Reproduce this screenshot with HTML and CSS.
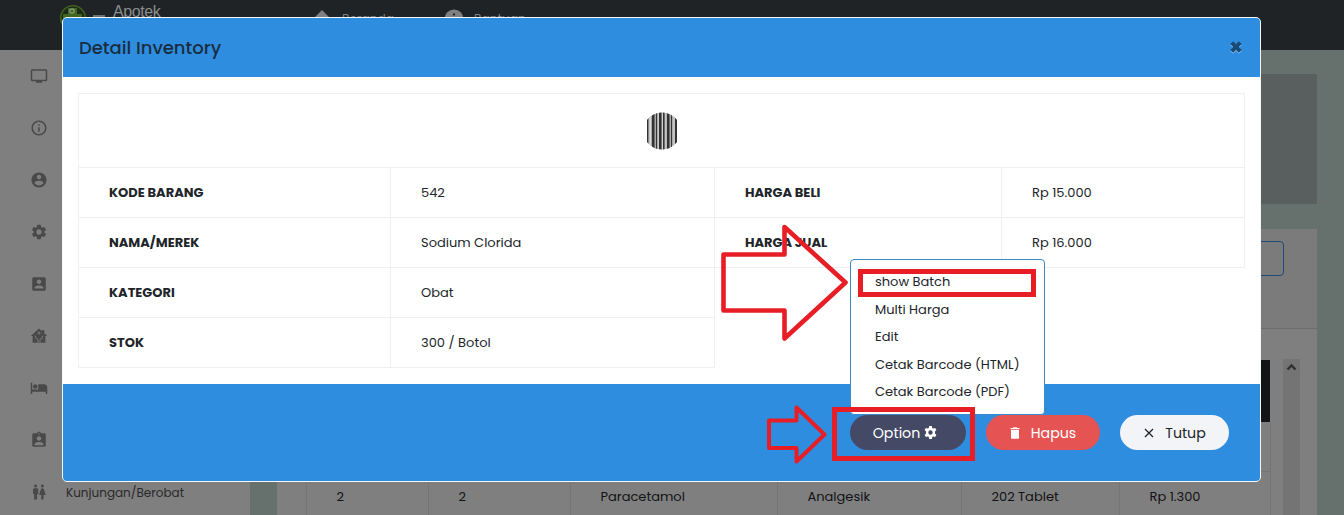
FILE: index.html
```html
<!DOCTYPE html>
<html lang="id">
<head>
<meta charset="utf-8">
<title>Detail Inventory</title>
<link rel="stylesheet" href="styles.css">
</head>
<body>
<div class="app">
  <header class="topbar">
    <svg class="logo" width="28" height="28" viewBox="0 0 28 28"><circle cx="14" cy="14" r="12.3" fill="#1d2a18" stroke="#42611f" stroke-width="1.6"/><path d="M9 4h9v6h5v8H4v-8h5z" fill="#42651f"/><circle cx="13" cy="7" r="2.2" fill="none" stroke="#8a9a7c" stroke-width="1.2"/></svg>
    <span class="burger"></span>
    <span class="brand">Apotek</span>
    <nav class="topnav">
      <a class="toplink"><svg width="18" height="18" viewBox="0 0 18 18"><path d="M9 1l9 9h-3v8H3v-8H0z" fill="#808080"/></svg><span>Beranda</span></a>
      <a class="toplink"><svg width="20" height="20" viewBox="0 0 20 20"><circle cx="10" cy="10" r="9.5" fill="#808080"/><path d="M9 4.500h2v2H9zM9 8.500h2v7H9z" fill="#1f2326"/></svg><span>Bantuan</span></a>
    </nav>
  </header>
  <div class="shell">
    <aside class="sidebar">
      <a class="side"><svg viewBox="0 0 24 24"><path d="M21 3H3c-1.100 0-2 .9-2 2v12c0 1.100.9 2 2 2h5v2h8v-2h5c1.100 0 2-.9 2-2V5c0-1.100-.9-2-2-2zm0 14H3V5h18v12z"/></svg></a>
      <a class="side"><svg viewBox="0 0 24 24"><path d="M11 7h2v2h-2zm0 4h2v6h-2zm1-9C6.480 2 2 6.480 2 12s4.480 10 10 10 10-4.480 10-10S17.520 2 12 2zm0 18c-4.410 0-8-3.590-8-8s3.590-8 8-8 8 3.590 8 8-3.590 8-8 8z"/></svg></a>
      <a class="side"><svg viewBox="0 0 24 24"><path d="M12 2C6.480 2 2 6.480 2 12s4.480 10 10 10 10-4.480 10-10S17.520 2 12 2zm0 3c1.660 0 3 1.340 3 3s-1.340 3-3 3-3-1.340-3-3 1.340-3 3-3zm0 14.200c-2.500 0-4.710-1.280-6-3.220.03-1.990 4-3.080 6-3.080 1.990 0 5.970 1.090 6 3.080-1.290 1.940-3.500 3.220-6 3.220z"/></svg></a>
      <a class="side"><svg viewBox="0 0 24 24"><path d="M19.140 12.940c.04-.3.06-.61.06-.94 0-.32-.02-.64-.07-.94l2.030-1.580c.18-.14.23-.41.12-.61l-1.920-3.320c-.12-.22-.37-.29-.59-.22l-2.390.96c-.5-.38-1.030-.7-1.620-.94l-.36-2.540c-.04-.24-.24-.41-.48-.41h-3.840c-.24 0-.43.17-.47.41l-.36 2.540c-.59.24-1.130.57-1.620.94l-2.390-.96c-.22-.08-.47 0-.59.22L2.740 8.870c-.12.21-.08.47.12.61l2.030 1.580c-.05.3-.09.63-.09.94s.02.64.07.94l-2.030 1.580c-.18.14-.23.41-.12.61l1.920 3.320c.12.22.37.29.59.22l2.390-.96c.5.38 1.030.7 1.620.94l.36 2.540c.05.24.24.41.48.41h3.840c.24 0 .44-.17.47-.41l.36-2.540c.59-.24 1.130-.56 1.620-.94l2.390.96c.22.08.47 0 .59-.22l1.920-3.320c.12-.22.07-.47-.12-.61l-2.010-1.580zM12 15.600c-1.980 0-3.600-1.620-3.600-3.600s1.620-3.600 3.600-3.600 3.600 1.620 3.600 3.600-1.620 3.600-3.600 3.600z"/></svg></a>
      <a class="side"><svg viewBox="0 0 24 24"><path d="M3 5v14c0 1.100.89 2 2 2h14c1.100 0 2-.9 2-2V5c0-1.100-.9-2-2-2H5c-1.110 0-2 .9-2 2zm12 4c0 1.660-1.340 3-3 3s-3-1.340-3-3 1.340-3 3-3 3 1.340 3 3zm-9 8c0-2 4-3.100 6-3.100s6 1.100 6 3.100v1H6v-1z"/></svg></a>
      <a class="side"><svg viewBox="0 0 24 24"><path d="M12 2l4 3.600V4h3v4.200l4 3.800h-2.500v9H3.500v-9H1z"/><g fill="none" stroke="#7f7f7f" stroke-width="1.200"><circle cx="12" cy="8" r="1.400"/><path d="M7 11.500q0 5 3.700 5V21M17 11.500q0 5-3.700 5V21"/></g></svg></a>
      <a class="side"><svg viewBox="0 0 24 24"><path d="M7 13c1.660 0 3-1.340 3-3S8.660 7 7 7s-3 1.340-3 3 1.340 3 3 3zm12-6h-8v7H3V5H1v15h2v-3h18v3h2v-9c0-2.210-1.790-4-4-4z"/></svg></a>
      <a class="side"><svg viewBox="0 0 24 24"><path d="M19 3h-4.180C14.400 1.840 13.300 1 12 1s-2.400.84-2.820 2H5c-1.100 0-2 .9-2 2v14c0 1.100.9 2 2 2h14c1.100 0 2-.9 2-2V5c0-1.100-.9-2-2-2zm-7 0c.55 0 1 .45 1 1s-.45 1-1 1-1-.45-1-1 .45-1 1-1zm0 4c1.660 0 3 1.340 3 3s-1.340 3-3 3-3-1.340-3-3 1.340-3 3-3zm6 12H6v-1.400c0-2 4-3.100 6-3.100s6 1.100 6 3.100V19z"/></svg></a>
      <a class="side"><svg viewBox="0 0 24 24"><path d="M5.500 22v-7.500H4V9c0-1.100.9-2 2-2h3c1.100 0 2 .9 2 2v5.500H9.500V22h-4zM18 22v-6h3l-2.540-7.630C18.180 7.550 17.420 7 16.560 7h-.12c-.86 0-1.630.55-1.900 1.370L12 16h3v6h3zM7.500 6c1.110 0 2-.89 2-2s-.89-2-2-2-2 .89-2 2 .89 2 2 2zm9 0c1.110 0 2-.89 2-2s-.89-2-2-2-2 .89-2 2 .89 2 2 2z"/></svg><span class="side-label">Kunjungan/Berobat</span></a>
    </aside>
    <main class="content">
      <section class="hero"></section>
      <section class="panel">
        <div class="panel-head"><div class="search"></div></div>
        <div class="panel-body">
          <div class="list">
            <div class="list-head"></div>
            <div class="list-row"><span></span><span></span><span></span><span></span><span></span><span></span></div>
            <div class="list-row"><span>2</span><span>2</span><span>Paracetamol</span><span>Analgesik</span><span>202 Tablet</span><span>Rp 1.300</span></div>
          </div>
          <div class="scroll"><svg width="11" height="8" viewBox="0 0 11 8"><path d="M1.500 6.500l4-4 4 4" fill="none" stroke="#303030" stroke-width="2.400"/></svg></div>
        </div>
      </section>
    </main>
  </div>
</div>

<div class="modal">
  <div class="modal-head"><h1>Detail Inventory</h1><svg width="12" height="13" viewBox="0 0 12 13"><path d="M1.700 2.700l8.600 8.600M10.300 2.700l-8.600 8.600" stroke="#88bfee" stroke-width="4"/><path d="M1.700 1.700l8.600 8.600M10.300 1.700l-8.600 8.600" stroke="#194b74" stroke-width="4"/></svg></div>
  <div class="modal-body">
    <div class="barcode">
      <svg width="30" height="38" viewBox="0 0 30 38"><clipPath id="round"><path d="M0 8Q6 .5 15 .5T30 8v22q-6 7.500-15 7.500T0 30z"/></clipPath><g clip-path="url(#round)"><path fill="#aaa" d="M0 0h30v38H0z"/><path fill="#333" d="M0 0h1.300v38H0zM5 0h2.500v38H5zM9 0h1v38H9zM12 0h2.500v38H12zM16 0h1.500v38H16zM20 0h2.500v38H20zM24 0h1v38h-1zM28 0h2v38h-2z"/><path fill="#ddd" d="M2.500 0h1.500v38H2.500zM11 0h.7v38H11zM15 0h.8v38H15zM18.500 0h.8v38h-.8zM26.500 0h1v38h-1z"/></g></svg>
    </div>
    <div class="details">
      <div class="half left">
        <div class="row"><b>KODE BARANG</b><span>542</span></div>
        <div class="row"><b>NAMA/MEREK</b><span>Sodium Clorida</span></div>
        <div class="row"><b>KATEGORI</b><span>Obat</span></div>
        <div class="row"><b>STOK</b><span>300 / Botol</span></div>
      </div>
      <div class="half right">
        <div class="row"><b>HARGA BELI</b><span>Rp 15.000</span></div>
        <div class="row"><b>HARGA JUAL</b><span>Rp 16.000</span></div>
      </div>
    </div>
  </div>
  <div class="modal-foot">
    <button class="btn option"><span>Option</span><svg width="13" height="13" viewBox="2 2 20 20"><path fill="#fff" fill-rule="evenodd" d="M10 2h4l.6 3 1.600.9 2.900-1 2 3.400L18.800 10.400v3.200l2.300 2.100-2 3.400-2.900-1-1.600.9-.6 3h-4l-.6-3-1.600-.9-2.900 1-2-3.400 2.300-2.100v-3.200L2.900 8.300l2-3.400 2.900 1L9.400 5zM12 8.600a3.400 3.400 0 100 6.800 3.400 3.400 0 000-6.800z"/></svg></button>
    <button class="btn delete"><svg width="10" height="12" viewBox="0 0 10 12"><path fill="#fff" d="M.5.900h2.300L3.500.2h3l.7.700h2.300v1.200h-9zM1 2.700h8V11q0 .8-.8.8H1.800Q1 11.800 1 11z"/></svg><span>Hapus</span></button>
    <button class="btn close"><svg width="10" height="10" viewBox="0 0 10 10"><path d="M1 1l8 8M9 1L1 9" stroke="#212529" stroke-width="1.300"/></svg><span>Tutup</span></button>
  </div>
</div>

<div class="menu">
  <a>show Batch</a><a>Multi Harga</a><a>Edit</a><a>Cetak Barcode (HTML)</a><a>Cetak Barcode (PDF)</a>
</div>

<svg class="marks" width="1344" height="515" viewBox="0 0 1344 515" fill="none" stroke="#e81e26" stroke-width="4.600" stroke-linejoin="round">
  <path d="M723.500 254.500h61V227l61 55.500-61 56V310.500h-61z"/>
  <path d="M769 420.500h27.500V407.500l28 27-28 27V448H769z" stroke-width="4"/>
  <path d="M860.500 271.500h173v23h-173zM834.500 409.500h138v49h-138z" stroke-width="5" stroke-linejoin="miter"/>
</svg>
</body>
</html>
```
FILE: styles.css
```css
* { box-sizing: border-box; }
body { margin: 0; width: 1344px; height: 515px; overflow: hidden; position: relative; font-family: Poppins, Inter, "Open Sans", sans-serif; font-size: 13px; color: #212529; background: #66706c; }
svg { display: block; flex: none; }

.app { height: 515px; overflow: hidden; }
.topbar { height: 50px; background: #1f2326; display: flex; align-items: flex-start; padding-left: 59px; }
.logo { margin-top: 4px; }
.burger { width: 12px; height: 2px; background: #6f7274; margin: 15px 8px 0 6px; }
.brand { font: 16px/18px "Liberation Sans", sans-serif; letter-spacing: -.4px; color: #8b8d8e; margin-top: 3px; width: 200px; }
.topnav { display: flex; gap: 49px; margin-top: 9px; }
.toplink { display: flex; gap: 11px; width: 82px; color: #808080; font-size: 12.200px; line-height: 20px; }
.toplink:last-child { gap: 10px; }

.shell { display: flex; height: 465px; }
.sidebar { width: 250px; background: #7f7f7f; }
.side { height: 52px; display: flex; align-items: center; padding-left: 30px; }
.side svg { width: 18px; height: 18px; fill: #494949; }
.side-label { margin: 2px 0 0 18px; font-size: 12px; color: #292929; }
.content { flex: 1; padding: 24px 27px 0; }
.hero { height: 130px; background: #585f5e; border-radius: 2px; margin-bottom: 25px; }
.panel { height: 300px; background: #7f7f7f; }
.panel-head { height: 100px; background: #7b7b7b; border-bottom: 1px solid #6c6c6c; padding: 12px 33px; }
.search { height: 35px; border: 1px solid #1d4c78; border-radius: 4px; }
.panel-body { display: flex; padding: 30px 17px 0 29px; }
.list { width: 965px; padding-top: 1px; }
.list-head { height: 62px; width: 964px; background: #121416; }
.list-row { height: 50px; display: grid; grid-template-columns: 122px 142px 207px 184px 158px 152px; border-right: 1px solid #757575; border-bottom: 1px solid #757575; line-height: 50px; color: #111315; }
.list-row span { border-left: 1px solid #757575; padding-left: 29.500px; }
.scroll { width: 17px; height: 170px; background: #747474; margin-left: 12px; padding: 4px 3px; }

.modal { position: absolute; left: 62px; top: 17px; width: 1199px; height: 465px; display: flex; flex-direction: column; background: #fff; border: 1px solid #f4f8fb; border-radius: 5px; overflow: hidden; }
.modal-head { height: 59px; flex: none; background: #2f8de0; display: flex; align-items: center; justify-content: space-between; padding: 0 18px 0 16px; }
.modal-head h1 { margin: 0; font-size: 18px; font-weight: 500; color: #182d42; }
.modal-head svg { margin-bottom: 1px; }
.modal-body { flex: 1; padding: 16px 15px; }
.barcode { height: 75px; border: 1px solid #eef0f1; display: flex; align-items: center; justify-content: center; }
.details { display: flex; align-items: flex-start; }
.half { border-right: 1px solid #eef0f1; }
.half.left { width: 637px; border-left: 1px solid #eef0f1; }
.half.right { width: 530px; }
.row { display: flex; height: 50px; line-height: 49px; border-bottom: 1px solid #eef0f1; }
.row b { padding-left: 30px; width: 311px; }
.right .row b { width: 286px; }
.row span { flex: 1; border-left: 1px solid #eef0f1; padding-left: 30px; }
.modal-foot { height: 97px; flex: none; background: #2f8de0; display: flex; align-items: center; justify-content: flex-end; gap: 20px; padding-right: 31px; }
.btn { height: 35px; border: 0; border-radius: 18px; display: flex; align-items: center; justify-content: center; padding: 0; font: 14.200px Poppins, Inter, sans-serif; }
.btn span { margin-top: 2px; }
.option { width: 116px; gap: 4px; padding-right: 6px; background: #444a66; color: #fff; }
.delete { width: 114px; gap: 11px; background: #e55353; color: #fff; }
.close { width: 109px; gap: 11px; padding-left: 1px; background: #f2f4f8; color: #212529; }

.menu { position: absolute; left: 850px; top: 259px; width: 195px; height: 156px; background: #fff; border: 1px solid #3a8ac9; border-radius: 4px; padding: 8px 24px; display: flex; flex-direction: column; }
.menu a { height: 27.500px; line-height: 27.500px; white-space: nowrap; }
.marks { position: absolute; left: 0; top: 0; }
```
